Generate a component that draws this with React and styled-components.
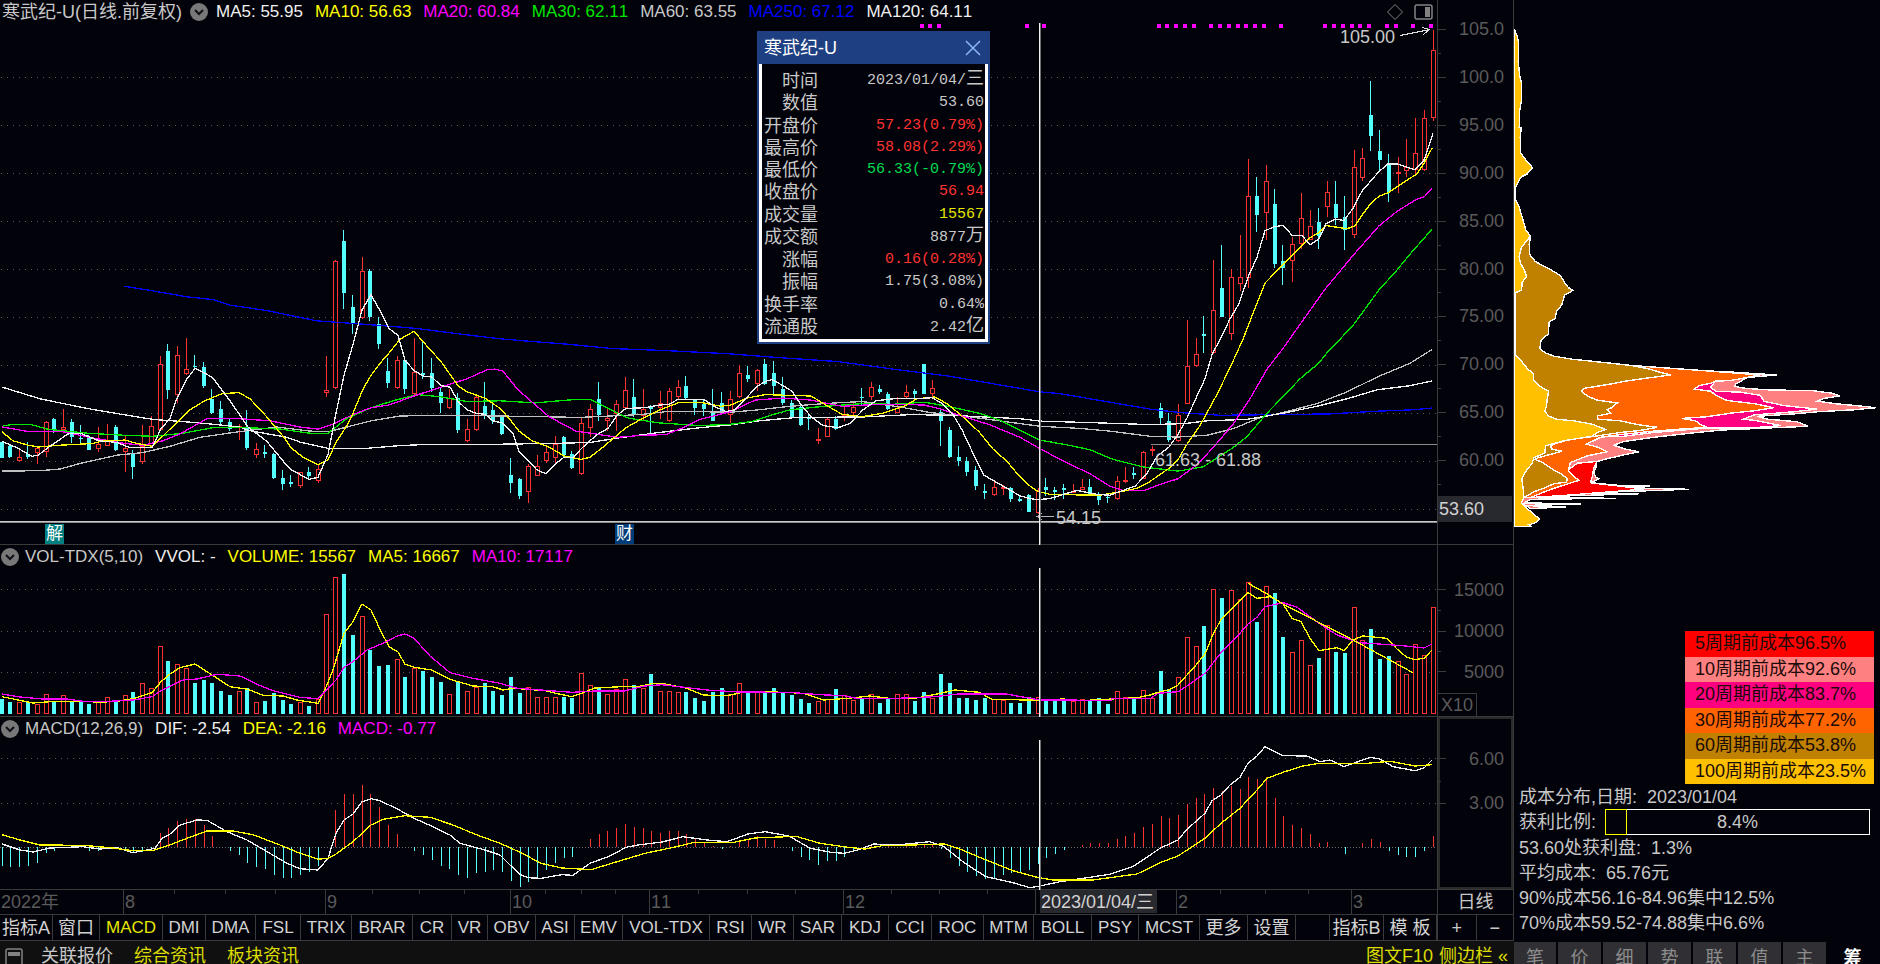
import React from "react";
import styled, { createGlobalStyle } from "styled-components";

const C = {
  bg: "#02020a",
  line: "#3a3a3a",
  dim: "#5a5a5a",
  text: "#c8c8c8",
  white: "#f0f0f0",
  up: "#ff3232",
  down: "#54ffff",
  yellow: "#ffff00",
  magenta: "#ff00ff",
  green: "#00e600",
  blue: "#0000ff",
};

/* ---------- data ---------- */

// Price rows: direction, high, body top, body bottom, low. 27.85 units make one yuan, 100.00 lies at 224.
const UNIT = 2.904;
const CANDLES = `c1283,1285,1330,1330 c1292,1294,1326,1330 r1300,1326,1338,1338 c1284,1318,1328,1334 r1297,1300,1316,1348 r1222,1226,1312,1327 c1213,1218,1248,1256 r1188,1240,1248,1250
c1217,1225,1270,1286 c1235,1272,1276,1286 c1262,1270,1306,1308 r1240,1290,1304,1312 r1232,1278,1294,1296 c1234,1240,1308,1310 r1266,1300,1312,1370 c1308,1318,1356,1391
r1235,1296,1343,1348 r1209,1236,1296,1302 r1035,1058,1248,1250 c999,1018,1134,1160 r1005,1032,1146,1170 r981,1072,1085,1088 c1031,1063,1067,1075 c1051,1066,1122,1126
c1130,1160,1198,1203 c1165,1188,1226,1236 c1217,1226,1246,1252 r1232,1236,1242,1278 c1191,1242,1301,1306 r1287,1305,1320,1330 c1292,1313,1317,1330 c1316,1318,1388,1392
c1366,1388,1405,1423 c1379,1401,1405,1414 r1370,1372,1412,1417 c1356,1371,1382,1394 r1348,1363,1396,1404 r1035,1132,1142,1152 r756,758,1128,1130 c669,700,852,896
c857,891,938,970 r747,788,924,926 c782,787,921,932 c922,941,1000,1013 c1040,1078,1112,1127 r1035,1046,1127,1130 c1040,1045,1130,1144 r981,1080,1143,1148
c990,1083,1090,1101 c1040,1084,1126,1138 c1124,1138,1170,1200 r1130,1156,1186,1188 c1140,1157,1248,1257 r1217,1245,1281,1283 r1146,1154,1250,1252 c1108,1180,1207,1217
c1162,1192,1224,1232 c1208,1212,1259,1262 c1330,1380,1404,1431 c1387,1391,1440,1448 r1348,1353,1430,1461 r1322,1354,1381,1382 r1297,1313,1338,1345 r1265,1290,1330,1348
c1266,1270,1320,1328 c1310,1318,1360,1362 r1215,1227,1377,1378 r1173,1188,1242,1270 c1108,1160,1206,1222 r1185,1214,1222,1252 r1162,1174,1202,1253 r1095,1132,1186,1190
c1101,1153,1206,1212 r1131,1188,1208,1222 c1175,1180,1188,1260 r1135,1170,1186,1218 r1128,1136,1224,1226 r1104,1124,1152,1160 c1091,1122,1156,1160 c1158,1160,1184,1206
c1160,1172,1188,1208 c1131,1200,1222,1224 c1139,1170,1196,1206 r1135,1158,1206,1228 r1061,1084,1154,1156 c1063,1088,1101,1108 r1071,1074,1116,1136 c1043,1058,1116,1118
c1047,1084,1122,1146 c1096,1130,1169,1175 c1162,1170,1210,1217 c1174,1182,1234,1236 c1204,1214,1217,1248 r1244,1275,1281,1288 r1213,1218,1269,1270 c1208,1217,1245,1248
r1178,1204,1212,1222 r1170,1182,1200,1212 c1127,1152,1156,1180 r1108,1124,1152,1162 c1118,1130,1138,1143 c1139,1144,1188,1192 r1153,1186,1198,1200 r1118,1138,1152,1158
c1130,1135,1143,1158 c1057,1058,1143,1144 r1104,1128,1143,1152 c1190,1196,1224,1296 c1240,1249,1326,1330 c1295,1326,1340,1353 c1327,1340,1372,1382 c1352,1366,1412,1422
c1405,1427,1433,1448 r1400,1414,1438,1440 r1408,1414,1420,1438 c1414,1418,1448,1457 c1438,1448,1456,1458 c1434,1437,1487,1488 r1418,1427,1491,1493 c1388,1414,1422,1440
c1414,1424,1428,1452 c1405,1418,1424,1448 r1405,1425,1430,1432 r1392,1414,1422,1424 c1391,1414,1436,1440 c1428,1438,1452,1466 c1438,1442,1446,1461 r1382,1398,1450,1452
r1357,1393,1396,1404 c1357,1374,1379,1391 r1310,1312,1390,1392 r1295,1305,1311,1323 c1170,1184,1213,1230 c1199,1222,1278,1283 r1174,1206,1281,1283 r930,1064,1172,1174
r981,1028,1064,1066 c918,970,977,1026 r756,901,1024,1027 c712,835,921,922 r782,805,969,987 r682,805,826,844 r461,570,808,835 c514,570,625,674
r479,527,620,697 c548,592,767,777 c712,758,777,828 r688,710,759,818 r560,632,708,722 r610,657,696,698 c604,645,686,722 r527,559,600,630
c527,592,634,654 c569,630,669,726 r435,484,681,690 r430,458,516,526 c235,335,395,438 c377,438,465,498 c447,474,558,587 r457,500,506,560
r405,486,498,514 r343,445,493,508 r318,342,495,497 r86,146,343,352`
  .split(/\s+/)
  .map((s) => ({ up: s[0] === "r", v: s.slice(1).split(",").map(Number) }));

// Volume bar tops and MACD bar ends, three units to a pixel row.
const VOLUME = `507 517 517 517 521 492 517 496 514 517 521 517 501 517 496 487 460 475 348 392 402 415 459 450 459 482 495 484 475 517 514 490 510 521 517 528 507 253 141 131
316 258 360 409 405 388 441 415 424 441 456 492 453 484 472 459 484 495 441 490 470 500 500 500 500 504 429 465 475 491 478 447 464 473 432 484 484 487 487 504
514 487 473 491 460 489 486 487 473 487 495 508 518 514 507 478 496 510 507 492 518 508 492 492 514 487 504 432 460 504 504 510 504 507 510 518 518 502 501 514
514 514 514 507 510 505 521 484 501 507 479 505 424 478 442 322 348 289 178 204 181 208 155 276 169 190 321 367 330 406 384 286 366 369 232 330 298 388 379 393
433 343 376 232`
  .split(/\s+/)
  .map(Number);

const MACD = `1008 1012 1012 1008 998 970 962 952 952 952 962 962 952 956 962 970 966 956 909 895 873 868 868 885 917 952 963 976 998 1012 1017 1034 1044 1044 1034 1026 1008 952 841 792
792 765 792 832 885 912 952 963 976 990 1008 1017 1034 1044 1028 1026 1021 1026 1052 1070 1056 1044 1021 998 984 980 952 927 912 904 895 882 891 895 904 909 904 904 912 927
936 948 957 948 932 930 918 928 931 952 962 980 990 1004 993 993 980 967 952 947 942 947 952 948 942 942 942 957 985 1008 1026 1039 1048 1044 1034 1030 1028 1021 1003 985
971 959 952 946 940 940 940 927 918 909 891 882 858 864 855 823 805 792 774 783 769 778 742 747 742 805 858 886 895 913 940 936 952 971 952 940 927 936 963 976
980 980 963 918`
  .split(/\s+/)
  .map(Number);

const PRICE_LINES = [
  [C.blue, "124,831 147,842 187,862 213,870 230,886 267,902 290,916 317,932 367,942 417,954 460,970 500,984 525,990 570,1000 611,1012 666,1018 728,1027 776,1038 838,1050 893,1072 948,1092 1020,1128 1040,1138 1060,1143 1100,1163 1150,1188 1180,1198 1220,1206 1280,1204 1330,1202 1377,1194 1413,1190 1432,1185"],
  ["#c0c0c0", "2,1368 40,1367 60,1362 80,1346 117,1322 143,1314 170,1296 200,1270 233,1256 277,1240 310,1252 328,1254 347,1240 371,1222 400,1208 440,1206 500,1208 580,1212 640,1204 670,1194 731,1197 759,1190 790,1180 824,1172 862,1166 900,1182 930,1198 969,1210 1020,1230 1040,1238 1080,1244 1110,1252 1150,1267 1178,1269 1207,1264 1233,1245 1260,1213 1283,1198 1317,1172 1347,1138 1377,1095 1410,1055 1432,1015"],
  [C.white, "2,1124 40,1158 87,1186 123,1204 153,1218 200,1228 240,1240 248,1250 287,1270 300,1284 328,1302 367,1302 400,1294 433,1290 500,1290 548,1288 590,1285 618,1272 659,1256 700,1242 731,1234 759,1222 797,1212 862,1211 911,1204 950,1206 1020,1216 1040,1223 1100,1228 1150,1233 1185,1230 1207,1222 1247,1218 1283,1200 1317,1180 1347,1158 1377,1132 1410,1120 1432,1106"],
  [C.green, "2,1238 13,1232 30,1232 47,1246 87,1258 125,1264 153,1267 183,1258 213,1242 247,1242 280,1246 310,1258 328,1258 347,1215 371,1184 393,1164 417,1146 440,1152 467,1166 500,1164 535,1170 576,1160 590,1160 604,1180 628,1214 659,1228 700,1236 731,1232 752,1224 773,1204 790,1190 817,1182 862,1172 893,1174 924,1168 948,1180 979,1200 1000,1220 1020,1250 1040,1278 1067,1292 1090,1306 1113,1334 1143,1356 1178,1368 1203,1356 1233,1300 1247,1268 1267,1200 1283,1152 1300,1100 1319,1054 1326,1028 1353,945 1379,842 1397,784 1410,738 1432,666"],
  [C.magenta, "2,1240 30,1254 63,1254 93,1272 125,1288 143,1293 163,1280 180,1260 207,1216 239,1216 270,1222 300,1240 318,1246 333,1232 353,1204 371,1184 389,1176 414,1150 441,1124 467,1100 487,1074 495,1072 503,1078 518,1132 549,1210 576,1252 618,1270 642,1264 666,1262 683,1242 700,1218 731,1195 755,1162 783,1156 811,1162 842,1180 866,1176 893,1174 924,1176 941,1188 962,1208 990,1234 1020,1270 1037,1298 1060,1334 1090,1376 1110,1412 1123,1424 1145,1424 1157,1410 1178,1390 1197,1350 1213,1300 1233,1232 1250,1158 1267,1072 1283,1012 1303,930 1325,840 1353,742 1379,656 1397,614 1417,578 1424,572 1432,548"],
  [C.yellow, "2,1254 13,1280 27,1292 38,1298 60,1293 93,1288 103,1280 125,1278 137,1288 152,1296 163,1266 177,1226 190,1190 204,1165 222,1143 239,1140 250,1158 266,1208 284,1270 291,1300 303,1328 318,1350 328,1335 336,1285 347,1235 353,1200 363,1130 371,1090 380,1055 390,1022 400,985 414,962 427,1005 441,1050 458,1120 467,1138 485,1156 501,1188 511,1222 519,1252 532,1280 549,1298 564,1324 581,1334 590,1328 604,1296 626,1242 642,1216 660,1190 680,1168 700,1168 721,1180 731,1176 747,1156 765,1146 786,1148 811,1150 828,1180 842,1203 862,1210 883,1200 904,1180 917,1158 935,1153 948,1174 962,1208 979,1254 993,1304 1007,1340 1020,1385 1027,1405 1037,1426 1050,1436 1100,1438 1117,1430 1137,1418 1147,1404 1169,1360 1178,1335 1187,1290 1200,1236 1217,1145 1230,1068 1243,985 1253,910 1265,822 1274,795 1292,742 1310,690 1319,676 1326,655 1347,664 1355,656 1362,625 1371,590 1379,570 1388,560 1406,525 1417,505 1424,474 1432,430"],
  [C.white, "2,1282 17,1300 32,1325 38,1322 50,1296 68,1260 80,1258 99,1280 107,1282 117,1285 130,1300 152,1300 161,1245 170,1215 177,1156 186,1104 195,1070 204,1082 213,1098 230,1164 248,1240 267,1282 284,1342 291,1364 309,1392 318,1386 328,1320 336,1200 344,1090 353,1000 362,900 371,856 380,902 389,954 398,974 405,1046 414,1076 423,1092 432,1095 441,1120 450,1124 458,1165 467,1190 476,1200 485,1203 493,1222 502,1228 513,1260 519,1310 537,1365 546,1376 555,1348 564,1328 573,1328 583,1298 597,1262 608,1244 617,1206 626,1186 645,1184 660,1176 669,1174 678,1160 704,1160 714,1180 726,1195 735,1190 747,1154 756,1124 765,1108 772,1102 783,1120 792,1136 801,1175 811,1210 823,1236 838,1242 850,1230 863,1190 876,1164 893,1158 915,1158 932,1155 941,1170 953,1204 962,1248 972,1310 984,1380 1002,1410 1020,1440 1029,1447 1037,1451 1050,1448 1063,1436 1077,1424 1098,1436 1110,1438 1123,1424 1135,1412 1147,1375 1157,1325 1169,1298 1178,1262 1187,1214 1197,1150 1205,1100 1212,1030 1221,980 1230,926 1239,882 1248,805 1257,747 1265,670 1274,659 1283,654 1292,683 1302,684 1310,711 1319,694 1326,650 1335,636 1344,640 1353,605 1362,555 1379,498 1388,476 1397,476 1406,484 1415,493 1424,465 1433,388"],
];

const VOLUME_LINES = [
  [C.yellow, "2,500 33,519 50,515 83,514 100,517 117,514 133,506 152,488 161,455 170,432 180,413 195,402 207,425 230,470 248,478 263,496 283,498 297,510 318,520 327,465 333,420 344,310 353,275 362,222 371,240 380,298 389,350 398,366 405,403 414,412 432,420 450,448 473,468 493,470 503,480 514,475 545,482 559,492 572,500 583,488 595,474 621,470 638,470 652,461 665,462 686,474 703,495 727,497 744,486 775,486 803,490 824,510 848,505 870,498 889,505 913,506 937,492 955,480 979,487 992,508 1040,511 1063,507 1080,512 1117,506 1137,503 1150,495 1160,485 1169,480 1178,465 1187,435 1196,405 1205,372 1212,320 1221,268 1239,215 1248,188 1257,205 1270,200 1275,207 1283,222 1292,265 1301,275 1310,325 1319,362 1337,353 1344,362 1353,330 1363,318 1387,325 1397,357 1406,380 1415,389 1424,385 1432,360"],
  [C.magenta, "2,492 20,501 43,507 67,507 83,514 110,514 133,510 152,500 161,482 183,450 197,447 217,433 240,438 257,463 273,482 300,502 318,506 336,450 344,412 353,395 367,360 383,340 397,318 405,312 414,325 430,378 450,428 473,445 500,460 517,475 572,487 596,483 624,483 645,468 662,464 707,480 738,486 789,487 820,494 844,497 858,506 889,506 934,500 958,492 1006,492 1040,510 1111,511 1112,506 1150,506 1158,490 1178,485 1187,468 1205,430 1221,368 1237,320 1248,282 1257,262 1265,230 1283,218 1297,232 1319,280 1337,315 1360,338 1403,347 1424,354 1432,342"],
  [C.yellow, "1248,160 1265,188 1283,222 1353,330 1413,428"],
];

const MACD_LINES = [
  [C.white, "2,942 20,960 33,966 50,954 83,950 100,957 117,953 133,968 143,962 155,955 162,925 170,912 180,885 197,870 207,871 227,905 247,930 267,965 287,1000 300,1016 318,1020 328,985 336,910 344,870 353,852 362,815 371,806 380,812 398,838 414,865 433,890 450,915 460,940 485,960 500,975 510,1005 521,1035 528,1043 541,1045 562,1034 573,1036 590,1000 610,978 626,952 638,945 662,936 683,920 707,930 727,935 748,912 765,905 789,918 810,955 831,967 844,970 858,960 874,942 896,945 930,935 944,950 965,1000 986,1040 1013,1058 1030,1073 1040,1068 1060,1055 1087,1043 1110,1033 1134,1008 1160,955 1178,930 1187,898 1205,850 1212,812 1221,795 1230,765 1240,742 1248,700 1257,678 1265,650 1283,677 1307,678 1320,695 1330,690 1344,710 1370,682 1380,687 1393,710 1415,722 1424,714 1432,690"],
  [C.yellow, "2,914 20,930 40,945 83,946 110,953 133,962 152,962 167,948 187,925 207,903 233,903 253,914 280,945 300,970 318,988 328,985 336,972 353,935 371,885 383,868 405,857 430,862 453,885 477,915 500,940 521,968 541,1000 562,1014 591,1019 617,995 645,970 672,953 693,938 734,937 755,924 796,919 820,940 848,952 865,957 882,947 913,945 944,942 958,955 982,985 1013,1022 1037,1042 1053,1050 1093,1050 1137,1032 1160,998 1178,978 1205,925 1221,880 1240,835 1257,780 1267,745 1283,727 1303,708 1319,700 1367,700 1390,694 1415,708 1432,704"],
];

// Cost distribution outlines, from the widest layer to the oldest holdings.
const COST_TOP = "282,86 290,105 295,125 293,180 298,220 303,240 303,290 297,325 296,370 302,372 299,400 301,445 318,467 326,474 336,487 320,505 300,515 293,530 285,545 285,578 296,602 308,640 316,668 330,685";
const COST_MID = `${COST_TOP} 326,710 327,738 345,760 385,780 420,800 435,825 445,836 458,843 432,857 424,885 408,905 404,925 386,935 383,970 362,988 358,1012 375,1025 400,1034 455,1043 545,1052 630,1061`;
const COST_END = "303,1460 312,1470 330,1485 340,1495 358,1507 345,1518 325,1524 332,1529 282,1529";
const COST_LAYERS = [
  ["#ff8080", `${COST_MID} 740,1070 860,1077 940,1081 1070,1089 980,1096 965,1105 945,1115 942,1122 975,1128 1040,1132 1180,1135 1235,1142 1258,1150 1210,1157 1190,1165 1250,1173 1320,1179 1366,1184 1300,1190 1190,1196 1120,1202 1010,1209 1040,1217 1130,1225 1163,1238 1090,1241 900,1249 800,1259 700,1270 610,1282 580,1293 610,1303 655,1312 610,1321 560,1332 525,1342 527,1357 520,1370 525,1385 535,1390 512,1402 590,1409 688,1411 600,1416 805,1421 600,1428 500,1432 655,1434 440,1440 320,1445 585,1447 330,1450 310,1460 480,1464 310,1468 435,1472 330,1477 ${COST_END}`],
  ["#ff0000", "530,1340 470,1345 443,1365 455,1380 475,1395 400,1415 330,1445 440,1438 600,1426 670,1420 600,1412 510,1402 515,1385 520,1360 530,1340"],
  ["#ff0080", "282,1100 822,1130 835,1120 885,1107 870,1124 885,1136 960,1139 1020,1148 1030,1165 1090,1178 1190,1188 1120,1196 1000,1205 970,1217 1010,1222 1080,1236 990,1243 860,1243 700,1256 600,1268 282,1272"],
  ["#ff6400", `${COST_MID} 860,1077 980,1086 1020,1088 975,1097 930,1105 885,1107 870,1113 835,1120 822,1130 870,1136 890,1150 920,1163 1000,1172 1060,1184 1000,1193 930,1200 860,1210 785,1215 825,1222 840,1233 860,1241 780,1246 700,1252 600,1262 540,1270 498,1290 530,1298 560,1312 500,1324 450,1343 443,1365 455,1380 475,1395 420,1412 380,1425 330,1445 282,1445`],
  ["#c08000", `${COST_MID} 680,1070 715,1080 750,1089 680,1098 620,1106 560,1117 490,1128 484,1136 500,1150 530,1162 590,1170 575,1183 560,1190 570,1200 530,1208 530,1217 600,1222 650,1233 710,1241 660,1250 600,1256 550,1263 500,1270 450,1275 400,1290 390,1295 395,1305 425,1310 400,1317 350,1330 345,1334 370,1345 400,1365 425,1378 440,1390 438,1400 400,1405 370,1418 340,1428 315,1443 282,1445`],
  ["#ffc000", `${COST_TOP} 322,695 303,718 296,745 300,765 312,785 318,803 305,820 303,843 284,850 284,1030 300,1045 320,1070 338,1085 340,1105 355,1120 384,1136 380,1160 378,1180 373,1195 385,1208 405,1217 460,1222 515,1232 555,1247 530,1256 515,1267 430,1280 375,1295 373,1315 340,1330 335,1345 315,1370 304,1390 308,1420 310,1445 ${COST_END}`],
];

const SIGNAL_BARS = [105, 106, 107, 117, 119, 132, 133, 134, 135, 136, 138, 139, 140, 141, 142, 143, 144, 146, 151, 152, 153, 154, 155, 156, 158, 159, 161, 163];

const PRICE_AXIS = ["105.0", "100.0", "95.00", "90.00", "85.00", "80.00", "75.00", "70.00", "65.00", "60.00"];
const PRICE_H = 545;
const VOL_H = 172;
const MACD_H = 173;
const PLOT_W = 1437;
const priceY = (i) => 29 + i * 48;

const QUOTE = [
  ["时间", "2023/01/04/", C.text, "三"],
  ["数值", "53.60", C.text],
  ["开盘价", "57.23(0.79%)", C.up],
  ["最高价", "58.08(2.29%)", C.up],
  ["最低价", "56.33(-0.79%)", "#00dc50"],
  ["收盘价", "56.94", C.up],
  ["成交量", "15567", "#e6e600"],
  ["成交额", "8877", C.text, "万"],
  ["涨幅", "0.16(0.28%)", C.up],
  ["振幅", "1.75(3.08%)", C.text],
  ["换手率", "0.64%", C.text],
  ["流通股", "2.42", C.text, "亿"],
];

const TABS = [
  ["指标A", 53], ["窗口", 47], ["MACD", 63], ["DMI", 43], ["DMA", 50], ["FSL", 45], ["TRIX", 51], ["BRAR", 61], ["CR", 39], ["VR", 36],
  ["OBV", 48], ["ASI", 39], ["EMV", 48], ["VOL-TDX", 87], ["RSI", 42], ["WR", 42], ["SAR", 48], ["KDJ", 47], ["CCI", 43], ["ROC", 52],
  ["MTM", 50], ["BOLL", 58], ["PSY", 47], ["MCST", 61], ["更多", 48], ["设置", 48],
];

// The January mark carries no label: the cursor date stands in its place.
const MONTHS = [[123, "8"], [325, "9"], [510, "10"], [649, "11"], [843, "12"], [1035, ""], [1176, "2"], [1351, "3"]];
const WEEKS = [174, 225, 275, 372, 419, 464, 545, 581, 615, 698, 747, 795, 891, 939, 987, 1220, 1265, 1308];

const LEGEND = [
  ["5周期前成本96.5%", "#ff0000"],
  ["10周期前成本92.6%", "#ff8080"],
  ["20周期前成本83.7%", "#ff0080"],
  ["30周期前成本77.2%", "#ff6400"],
  ["60周期前成本53.8%", "#c08000"],
  ["100周期前成本23.5%", "#ffc000"],
];

/* ---------- geometry helpers ---------- */

const barX = (i) => Math.round(1.6 + 8.78 * i);
const scalePoints = (pts, fx, fy) =>
  pts
    .split(" ")
    .map((p) => p.split(",").map(Number))
    .map(([x, y]) => `${fx(x).toFixed(1)},${fy(y).toFixed(1)}`)
    .join(" ");
const same = (x) => x;
const pricePx = (v) => v / UNIT;
const volPx = (v) => v / 3 - 15;
const macdPx = (v) => v / 3 - 187;
const pct = (v, total) => `${(v / total) * 100}%`;

/* ---------- styles ---------- */

const GlobalStyle = createGlobalStyle`
  * { box-sizing: border-box; }
  body {
    margin: 0;
    background: ${C.bg};
    color: ${C.text};
    font: 18px/24px "Liberation Sans", "Noto Sans CJK SC", sans-serif;
    font-kerning: none;
  }
  button, a { font: inherit; font-kerning: none; color: inherit; text-decoration: none; }
`;

const Page = styled.div`
  display: grid;
  grid-template-columns: minmax(0, 1fr) 77px 366px;
  grid-template-rows: minmax(0, 545fr) minmax(0, 172fr) minmax(0, 173fr) 25px 26px 23px;
  height: 100vh;
  min-height: 720px;
  overflow: hidden;
`;

const Panel = styled.section`
  position: relative;
  display: grid;
  grid-template: minmax(0, 1fr) / minmax(0, 1fr);
  box-shadow: inset 0 -1px ${C.line};
  > svg, > header { grid-area: 1 / 1; }
`;

const Plot = styled.svg`
  display: block;
  width: 100%;
  height: 100%;
  overflow: hidden;
`;

const PanelHeader = styled.header`
  position: relative;
  display: flex;
  align-items: center;
  align-self: start;
  height: 24px;
  padding-left: ${(p) => p.$inset}px;
  gap: ${(p) => p.$gap}px;
  white-space: nowrap;
`;

const Title = styled.h2`
  margin: 0;
  font-size: ${(p) => (p.$small ? 17 : 18)}px;
  font-weight: 400;
`;

const Readings = styled.div`
  display: flex;
  gap: 12px;
  font-size: 17px;
`;

const Reading = styled.span`
  color: ${(p) => p.$color};
`;

const RoundButton = styled.button`
  display: grid;
  place-items: center;
  width: 18px;
  height: 18px;
  padding: 0;
  border: 0;
  border-radius: 50%;
  background: #787878;
`;

const HeaderTools = styled.div`
  display: flex;
  align-items: center;
  gap: 10px;
  margin-left: auto;
  padding-right: 4px;
`;

const ToolButton = styled.button`
  display: grid;
  padding: 0;
  border: 0;
  background: none;
`;

const Note = styled.span`
  position: absolute;
  line-height: 20px;
  transform: translateY(-50%);
  white-space: nowrap;
`;

const Badge = styled.span`
  position: absolute;
  bottom: 1px;
  width: 19px;
  height: 20px;
  background: ${(p) => p.$color};
  color: #fff;
  font-size: 17px;
  line-height: 19px;
  text-align: center;
`;

const Axis = styled.aside`
  position: relative;
  border-left: 1px solid ${C.line};
  border-right: 1px solid ${C.line};
  border-bottom: 1px solid ${C.line};
  box-shadow: ${(p) => (p.$boxed ? `inset 0 0 0 2px #2a2a2a` : "none")};
`;

const AxisLabel = styled.span`
  position: absolute;
  right: 9px;
  color: ${C.dim};
  line-height: 20px;
  transform: translateY(-50%);
`;

const AxisMark = styled.i`
  position: absolute;
  left: 0;
  width: ${(p) => (p.$minor ? 3 : 8)}px;
  height: 1px;
  background: ${C.line};
`;

const CursorPrice = styled.span`
  position: absolute;
  left: 0;
  right: 1px;
  height: 26px;
  padding-left: 1px;
  line-height: 26px;
  background: #28282f;
  color: #d2d2d2;
`;

const Scale = styled.span`
  position: absolute;
  left: 0;
  bottom: 0;
  width: 39px;
  height: 23px;
  padding-left: 3px;
  border: solid ${C.line};
  border-width: 1px 1px 0 0;
  line-height: 22px;
  color: ${C.dim};
`;

const Popup = styled.section`
  position: absolute;
  top: 31px;
  left: ${(p) => p.$left};
  width: 233px;
  border: 2px solid #1e4082;
  background: ${C.bg};
`;

const PopupHead = styled.header`
  display: flex;
  align-items: center;
  justify-content: space-between;
  height: 31px;
  padding: 0 7px 2px 5px;
  background: #1e4082;
  color: #fff;
`;

const QuoteTable = styled.table`
  width: 100%;
  height: 278px;
  border: solid #fff;
  border-width: 0 3px 3px 3px;
  border-spacing: 0;
  padding: 5px 1px 0 2px;
  line-height: 20px;
  th, td { padding: 0; font-weight: 400; text-align: right; }
  th { width: 54px; }
`;

const QuoteValue = styled.td`
  color: ${(p) => p.$color};
  font-family: "Liberation Mono", "Noto Sans CJK SC", monospace;
  font-size: 15px;
  b { font-size: 18px; font-weight: 400; line-height: 18px; }
`;

const TimeAxis = styled.div`
  position: relative;
  border-bottom: 1px solid ${C.line};
  color: ${C.dim};
  padding-left: 1px;
`;

const Month = styled.span`
  position: absolute;
  top: 0;
  bottom: 0;
  padding-left: 1px;
  border-left: 1px solid ${C.line};
`;

const Week = styled.i`
  position: absolute;
  top: 0;
  width: 1px;
  height: 4px;
  background: ${C.line};
`;

const CursorDate = styled.time`
  position: absolute;
  top: 0;
  height: 23px;
  width: 117px;
  padding-left: 1px;
  background: #28282f;
  color: #d2d2d2;
  white-space: nowrap;
`;

const Period = styled.button`
  padding: 0;
  border: solid ${C.line};
  border-width: 0 1px 1px 1px;
  background: none;
  text-align: center;
`;

const TabBar = styled.nav`
  display: flex;
  border-bottom: 1px solid ${C.line};
  overflow: hidden;
`;

const Tab = styled.button`
  flex: 0 0 ${(p) => p.$width}px;
  padding: 0;
  border: 0;
  border-right: 1px solid ${C.line};
  background: none;
  && { color: ${(p) => (p.$active ? "#e6e600" : "#d2d2d2")}; }
  font-size: ${(p) => (p.$wide ? 18 : 17)}px;
  white-space: nowrap;
`;

const Spacer = styled.span`
  flex: 1 1 0;
  border-right: 1px solid ${C.line};
`;

const ZoomCell = styled.div`
  display: grid;
  grid-template-columns: 1fr 1fr;
  border: solid ${C.line};
  border-width: 0 1px 1px 1px;
  button { padding: 0; border: 0; background: none; }
  button + button { border-left: 1px solid ${C.line}; }
`;

const CostPanel = styled.section`
  grid-area: 1 / 3 / 2 / 4;
  min-height: 0;
`;

const InfoPanel = styled.section`
  grid-area: 2 / 3 / 6 / 4;
  display: flex;
  flex-direction: column;
  justify-content: flex-end;
  padding: 0 6px 5px 5px;
`;

const Legend = styled.ul`
  display: grid;
  grid-template-rows: repeat(6, 1fr);
  align-self: flex-end;
  width: 189px;
  height: 153px;
  margin: 0;
  padding: 0;
  list-style: none;
  color: #1a0a08;
  white-space: nowrap;
`;

const LegendItem = styled.li`
  padding-left: 10px;
  background: ${(p) => p.$color};
`;

const Facts = styled.div`
  display: grid;
  grid-template-rows: repeat(6, 1fr);
  align-items: center;
  height: 152px;
  white-space: nowrap;
`;

const RatioRow = styled.div`
  display: flex;
  align-items: center;
  gap: 9px;
`;

const RatioBar = styled.div`
  position: relative;
  flex: 1;
  height: 26px;
  margin-right: 4px;
  border: 1px solid #fff;
  text-align: center;
`;

const RatioFill = styled.i`
  position: absolute;
  inset: -1px auto -1px -1px;
  border: 1px solid ${C.yellow};
`;

const StatusBar = styled.footer`
  grid-area: 6 / 1 / 7 / 3;
  display: flex;
  gap: 21px;
  align-items: flex-start;
  padding: 6px 6px 0 5px;
  background: #101010;
  line-height: 18px;
  white-space: nowrap;
  overflow: hidden;
`;

const StatusIcon = styled.svg`
  overflow: visible;
`;

const StatusLink = styled.a`
  && { color: ${(p) => (p.$plain ? C.text : "#dcdc00")}; }
`;

const StatusRight = styled.div`
  display: flex;
  gap: 6px;
  margin-left: auto;
`;

const SideTabs = styled.nav`
  grid-area: 6 / 3 / 7 / 4;
  display: grid;
  grid-template-columns: 42px repeat(6, 43px) 1fr;
  gap: 2px;
  padding: 1px 3px 0 0;
  overflow: hidden;
`;

const SideTab = styled.button`
  height: 31px;
  padding: 0;
  border: 0;
  background: ${(p) => (p.$active ? "none" : "#303034")};
  && { color: ${(p) => (p.$active ? "#fff" : "#8c8c8c")}; }
  font-weight: ${(p) => (p.$active ? 700 : 400)};
`;

/* ---------- drawings ---------- */

const Chevron = () => (
  <svg width="12" height="8" viewBox="0 0 12 8">
    <path d="M2 2l4 4 4-4" fill="none" stroke="#101018" strokeWidth="2" />
  </svg>
);

const Grid = ({ rows }) => (
  <g stroke="#5c5c5c" strokeDasharray="1 5">
    {rows.map((y) => (
      <line key={y} x1="1" x2={PLOT_W} y1={y + 0.5} y2={y + 0.5} />
    ))}
  </g>
);

const Lines = ({ lines, fy }) =>
  lines.map(([color, pts], i) => (
    <polyline key={i} points={scalePoints(pts, same, fy)} fill="none" stroke={color} strokeWidth="1.3" />
  ));

const Cursor = ({ height }) => (
  <g>
    <rect x="1039" y="23" width="1" height={height} fill="#f0f0f0" />
    <rect x="1040" y="23" width="1" height={height} fill="#6e6e6e" />
  </g>
);

const Body = ({ x, y, h, up }) =>
  up ? (
    <rect x={x - 1.5} y={y + 0.5} width="4" height={Math.max(1, h - 1)} fill={C.bg} stroke={C.up} />
  ) : (
    <rect x={x - 2} y={y} width="4" height={Math.max(1, h)} fill={C.down} />
  );

const PricePlot = () => (
  <Plot viewBox={`0 0 ${PLOT_W} ${PRICE_H}`} preserveAspectRatio="none" shapeRendering="crispEdges">
    <Grid rows={[1, 2, 3, 4, 5, 6, 7, 8, 9, 10].map(priceY)} />
    {CANDLES.map(({ up, v }, i) => {
      const [hi, top, bottom, lo] = v.map((n) => Math.round(pricePx(n)));
      const x = barX(i);
      return (
        <g key={i}>
          <rect x={up ? x : x - 1} y={hi} width="1" height={lo - hi} fill={up ? C.up : C.down} />
          <Body x={x} y={top} h={bottom - top} up={up} />
        </g>
      );
    })}
    <Lines lines={PRICE_LINES} fy={pricePx} />
    {SIGNAL_BARS.map((i) => (
      <rect key={i} x={barX(i) - 4} y="24" width="4" height="4" fill={C.magenta} />
    ))}
    <line x1="1151" x2={PLOT_W} y1="444.5" y2="444.5" stroke="#8c8c8c" />
    <path d="M1400 35.5L1430 29.5M1422 27.5L1430 29.5M1423 34.5L1430 29.5" stroke="#dcdcdc" fill="none" />
    <path d="M1037 516.5H1054M1042 513.5L1037 516.5L1042 519.5" stroke="#b4b4b4" fill="none" />
    <rect x="0" y="521" width={PLOT_W} height="1" fill="#c8c8c8" />
    <rect x="0" y="522" width={PLOT_W} height="1" fill="#8c8c8c" />
    <Cursor height={PRICE_H} />
  </Plot>
);

const VolumePlot = () => (
  <Plot viewBox={`0 0 ${PLOT_W} ${VOL_H}`} preserveAspectRatio="none" shapeRendering="crispEdges">
    <Grid rows={[44, 86, 127]} />
    {VOLUME.map((v, i) => {
      const y = Math.round(volPx(v));
      return <Body key={i} x={barX(i)} y={y} h={169 - y} up={CANDLES[i].up} />;
    })}
    <Lines lines={VOLUME_LINES} fy={volPx} />
    <Cursor height={VOL_H} />
  </Plot>
);

const MacdPlot = () => (
  <Plot viewBox={`0 0 ${PLOT_W} ${MACD_H}`} preserveAspectRatio="none" shapeRendering="crispEdges">
    <Grid rows={[41, 86]} />
    <line x1="0" x2={PLOT_W} y1="130.5" y2="130.5" stroke="#6e6e6e" strokeDasharray="1 2" />
    {MACD.map((v, i) => {
      const y = Math.round(macdPx(v));
      if (y === 130) return null;
      return <rect key={i} x={barX(i)} y={Math.min(y, 130)} width="1" height={Math.abs(y - 130)} fill={y < 130 ? C.up : C.down} />;
    })}
    <Lines lines={MACD_LINES} fy={macdPx} />
    <Cursor height={MACD_H} />
  </Plot>
);

const CostPlot = () => (
  <Plot viewBox={`0 0 366 ${PRICE_H}`} preserveAspectRatio="none" shapeRendering="crispEdges">
    {COST_LAYERS.map(([color, pts]) => (
      <polygon key={color} points={scalePoints(pts, (x) => (x - 282) / 3 + 0.5, pricePx)} fill={color} stroke="#fff" strokeWidth="1.4" />
    ))}
  </Plot>
);

const AxisTicks = ({ rows, height }) =>
  rows.map(([y, minor]) => <AxisMark key={y} $minor={minor} style={{ top: pct(y, height) }} />);

/* ---------- page ---------- */

export default function App() {
  const priceTicks = PRICE_AXIS.flatMap((_, i) => [[priceY(i), false], [priceY(i) + 24, true]]);
  return (
    <Page>
      <GlobalStyle />

      <Panel>
        <PricePlot />
        <PanelHeader $inset={2} $gap={8}>
          <Title>寒武纪-U(日线.前复权)</Title>
          <RoundButton aria-label="主图菜单"><Chevron /></RoundButton>
          <Readings>
            <Reading $color={C.white}>MA5: 55.95</Reading>
            <Reading $color={C.yellow}>MA10: 56.63</Reading>
            <Reading $color={C.magenta}>MA20: 60.84</Reading>
            <Reading $color={C.green}>MA30: 62.11</Reading>
            <Reading $color={C.text}>MA60: 63.55</Reading>
            <Reading $color={C.blue}>MA250: 67.12</Reading>
            <Reading $color={C.white}>MA120: 64.11</Reading>
          </Readings>
          <HeaderTools>
            <ToolButton aria-label="标记">
              <svg width="18" height="18" viewBox="0 0 18 18">
                <path d="M9 1.5L16.5 9L9 16.5L1.5 9Z" fill="none" stroke="#828282" />
              </svg>
            </ToolButton>
            <ToolButton aria-label="侧栏">
              <svg width="19" height="18" viewBox="0 0 19 18">
                <rect x="1" y="2" width="17" height="14" rx="2" fill="none" stroke="#828282" strokeWidth="1.5" />
                <rect x="11" y="4" width="5" height="10" fill="#828282" />
              </svg>
            </ToolButton>
          </HeaderTools>
        </PanelHeader>
        <Note style={{ left: pct(1340, PLOT_W), top: pct(37, PRICE_H) }}>105.00</Note>
        <Note style={{ left: pct(1056, PLOT_W), top: pct(518, PRICE_H) }}>54.15</Note>
        <Note style={{ left: pct(1155, PLOT_W), top: pct(460, PRICE_H) }}>61.63 - 61.88</Note>
        <Badge $color="#008080" style={{ left: pct(45, PLOT_W) }}>解</Badge>
        <Badge $color="#003c78" style={{ left: pct(615, PLOT_W) }}>财</Badge>

        <Popup $left={pct(757, PLOT_W)}>
          <PopupHead>
            <Title>寒武纪-U</Title>
            <ToolButton aria-label="关闭">
              <svg width="16" height="16" viewBox="0 0 16 16">
                <path d="M1 1L15 15M15 1L1 15" stroke="#8cb4fa" strokeWidth="1.5" />
              </svg>
            </ToolButton>
          </PopupHead>
          <QuoteTable>
            <tbody>
              {QUOTE.map(([name, value, color, unit]) => (
                <tr key={name}>
                  <th scope="row">{name}</th>
                  <QuoteValue $color={color}>
                    {value}
                    {unit && <b>{unit}</b>}
                  </QuoteValue>
                </tr>
              ))}
            </tbody>
          </QuoteTable>
        </Popup>
      </Panel>
      <Axis>
        <AxisTicks rows={priceTicks} height={PRICE_H} />
        {PRICE_AXIS.map((label, i) => (
          <AxisLabel key={label} style={{ top: pct(priceY(i), PRICE_H) }}>{label}</AxisLabel>
        ))}
        <CursorPrice style={{ top: pct(497, PRICE_H) }}>53.60</CursorPrice>
      </Axis>

      <Panel>
        <VolumePlot />
        <PanelHeader $inset={1} $gap={6}>
          <RoundButton aria-label="成交量菜单"><Chevron /></RoundButton>
          <Readings>
            <Title $small>VOL-TDX(5,10)</Title>
            <Reading $color={C.white}>VVOL: -</Reading>
            <Reading $color={C.yellow}>VOLUME: 15567</Reading>
            <Reading $color={C.yellow}>MA5: 16667</Reading>
            <Reading $color={C.magenta}>MA10: 17117</Reading>
          </Readings>
        </PanelHeader>
      </Panel>
      <Axis>
        <AxisTicks rows={[[44, false], [65, true], [86, false], [107, true], [127, false]]} height={VOL_H} />
        <AxisLabel style={{ top: pct(45, VOL_H) }}>15000</AxisLabel>
        <AxisLabel style={{ top: pct(87, VOL_H) }}>10000</AxisLabel>
        <AxisLabel style={{ top: pct(128, VOL_H) }}>5000</AxisLabel>
        <Scale>X10</Scale>
      </Axis>

      <Panel>
        <MacdPlot />
        <PanelHeader $inset={1} $gap={6}>
          <RoundButton aria-label="MACD 菜单"><Chevron /></RoundButton>
          <Readings>
            <Title $small>MACD(12,26,9)</Title>
            <Reading $color={C.white}>DIF: -2.54</Reading>
            <Reading $color={C.yellow}>DEA: -2.16</Reading>
            <Reading $color={C.magenta}>MACD: -0.77</Reading>
          </Readings>
        </PanelHeader>
      </Panel>
      <Axis $boxed>
        <AxisTicks rows={[[41, false], [64, true], [86, false]]} height={MACD_H} />
        <AxisLabel style={{ top: pct(42, MACD_H) }}>6.00</AxisLabel>
        <AxisLabel style={{ top: pct(87, MACD_H) }}>3.00</AxisLabel>
      </Axis>

      <TimeAxis>
        2022年
        {MONTHS.map(([x, label]) => (
          <Month key={x} style={{ left: pct(x, PLOT_W) }}>{label}</Month>
        ))}
        {WEEKS.map((x) => (
          <Week key={x} style={{ left: pct(x, PLOT_W) }} />
        ))}
        <CursorDate dateTime="2023-01-04" style={{ left: pct(1040, PLOT_W) }}>2023/01/04/三</CursorDate>
      </TimeAxis>
      <Period>日线</Period>

      <TabBar>
        {TABS.map(([label, width]) => (
          <Tab key={label} $width={width} $active={label === "MACD"} $wide={/[^\x00-\x7f]/.test(label)}>{label}</Tab>
        ))}
        <Spacer />
        <Tab $width={54} $wide>指标B</Tab>
        <Tab $width={53} $wide>模 板</Tab>
      </TabBar>
      <ZoomCell>
        <button aria-label="放大">+</button>
        <button aria-label="缩小">−</button>
      </ZoomCell>

      <CostPanel>
        <CostPlot />
      </CostPanel>

      <InfoPanel>
        <Legend>
          {LEGEND.map(([label, color]) => (
            <LegendItem key={label} $color={color}>{label}</LegendItem>
          ))}
        </Legend>
        <Facts>
          <div>成本分布,日期:&nbsp; 2023/01/04</div>
          <RatioRow>
            <span>获利比例:</span>
            <RatioBar>
              <RatioFill style={{ width: "8.4%" }} />
              8.4%
            </RatioBar>
          </RatioRow>
          <div>53.60处获利盘:&nbsp; 1.3%</div>
          <div>平均成本:&nbsp; 65.76元</div>
          <div>90%成本56.16-84.96集中12.5%</div>
          <div>70%成本59.52-74.88集中6.6%</div>
        </Facts>
      </InfoPanel>

      <StatusBar>
        <StatusIcon width="15" height="17" viewBox="0 0 15 17">
          <rect x="1" y="2" width="16" height="18" rx="2" fill="none" stroke="#828282" strokeWidth="1.5" />
          <rect x="3" y="5" width="12" height="4" fill="#828282" />
        </StatusIcon>
        <StatusLink href="#quotes" $plain>关联报价</StatusLink>
        <StatusLink href="#news">综合资讯</StatusLink>
        <StatusLink href="#sector">板块资讯</StatusLink>
        <StatusRight>
          <StatusLink href="#f10">图文F10</StatusLink>
          <StatusLink href="#side">侧边栏 «</StatusLink>
        </StatusRight>
      </StatusBar>
      <SideTabs>
        {["笔", "价", "细", "势", "联", "值", "主", "筹"].map((label) => (
          <SideTab key={label} $active={label === "筹"}>{label}</SideTab>
        ))}
      </SideTabs>
    </Page>
  );
}
